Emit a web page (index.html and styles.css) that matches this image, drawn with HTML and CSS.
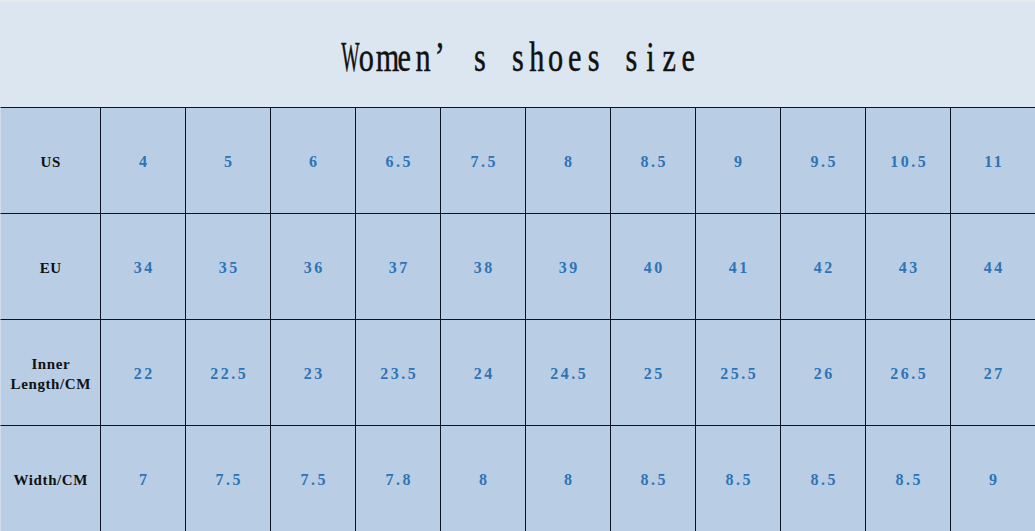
FILE: index.html
```html
<!DOCTYPE html>
<html>
<head>
<meta charset="utf-8">
<link rel="stylesheet" href="styles.css">
</head>
<body>
<div class="chart">
  <div class="title">
    <h1 class="title-text"><span class="narrow">W</span><span>o</span><span>m</span><span>e</span><span>n</span><span class="wide">’</span><span>s</span><span> </span><span>s</span><span>h</span><span>o</span><span>e</span><span>s</span><span> </span><span>s</span><span>i</span><span>z</span><span>e</span></h1>
  </div>
  <div class="grid">
    <div class="cell head">US</div>
    <div class="cell">4</div><div class="cell">5</div><div class="cell">6</div><div class="cell">6.5</div><div class="cell">7.5</div><div class="cell">8</div><div class="cell">8.5</div><div class="cell">9</div><div class="cell">9.5</div><div class="cell">10.5</div><div class="cell">11</div>
    <div class="cell head">EU</div>
    <div class="cell">34</div><div class="cell">35</div><div class="cell">36</div><div class="cell">37</div><div class="cell">38</div><div class="cell">39</div><div class="cell">40</div><div class="cell">41</div><div class="cell">42</div><div class="cell">43</div><div class="cell">44</div>
    <div class="cell head">Inner<br>Length/CM</div>
    <div class="cell">22</div><div class="cell">22.5</div><div class="cell">23</div><div class="cell">23.5</div><div class="cell">24</div><div class="cell">24.5</div><div class="cell">25</div><div class="cell">25.5</div><div class="cell">26</div><div class="cell">26.5</div><div class="cell">27</div>
    <div class="cell head">Width/CM</div>
    <div class="cell">7</div><div class="cell">7.5</div><div class="cell">7.5</div><div class="cell">7.8</div><div class="cell">8</div><div class="cell">8</div><div class="cell">8.5</div><div class="cell">8.5</div><div class="cell">8.5</div><div class="cell">8.5</div><div class="cell">9</div>
  </div>
</div>
</body>
</html>
```
FILE: styles.css
```css
* { box-sizing: border-box; }
html, body { margin: 0; padding: 0; }
body {
  width: 1035px;
  height: 531px;
  overflow: hidden;
  background: #b9cde5;
  font-family: "Liberation Serif", "DejaVu Serif", serif;
}
.chart {
  display: flex;
  flex-direction: column;
  width: 1035px;
}
.title {
  height: 107px;
  background: #dce6f0;
  border-top: 2px solid #e8ebee;
  display: flex;
  align-items: center;
  justify-content: center;
}
.title-text {
  margin: 4px 0 0 0;
  display: flex;
  font-weight: normal;
  font-size: 42px;
  line-height: 42px;
  color: #111;
  transform: scaleX(0.72);
  white-space: pre;
  -webkit-text-stroke: 0.5px #111;
}
.title-text span {
  display: inline-block;
  width: 26.3px;
  text-align: center;
}
.title-text span.narrow {
  transform: scaleX(0.64);
}
.title-text span.wide {
  width: 52.6px;
  text-align: left;
  padding-left: 3px;
}
.grid {
  display: grid;
  grid-template-columns: 100px repeat(11, 85px);
  grid-template-rows: repeat(4, 106px);
}
.cell {
  border-top: 1px solid #0d1320;
  border-left: 1px solid #0d1320;
  display: flex;
  align-items: center;
  justify-content: center;
  text-align: center;
  font-size: 16px;
  font-weight: bold;
  letter-spacing: 2.5px;
  padding-left: 2.5px;
  color: #2e74b5;
  padding-top: 2px;
}
.cell.head {
  border-left: 1px solid #d0dcea;
  color: #111;
  line-height: 20px;
  font-size: 15px;
  letter-spacing: 0.6px;
  padding-left: 0.6px;
}
```
